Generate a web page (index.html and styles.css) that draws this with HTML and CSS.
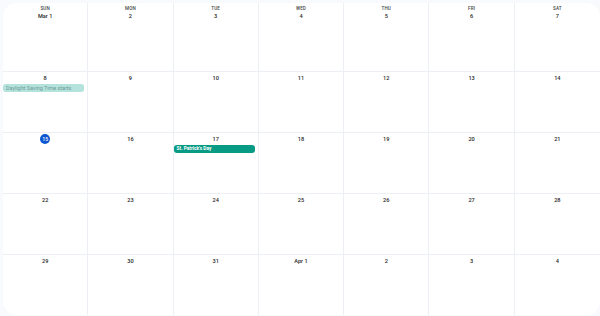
FILE: index.html
```html
<!DOCTYPE html>
<html>
<head>
<meta charset="utf-8">
<link rel="stylesheet" href="styles.css">
</head>
<body>
<div class="panel">
  <div class="grid">
    <div class="cell first"><div class="dow">SUN</div><div class="date">Mar 1</div></div>
    <div class="cell first"><div class="dow">MON</div><div class="date">2</div></div>
    <div class="cell first"><div class="dow">TUE</div><div class="date">3</div></div>
    <div class="cell first"><div class="dow">WED</div><div class="date">4</div></div>
    <div class="cell first"><div class="dow">THU</div><div class="date">5</div></div>
    <div class="cell first"><div class="dow">FRI</div><div class="date">6</div></div>
    <div class="cell first last-col"><div class="dow">SAT</div><div class="date">7</div></div>

    <div class="cell"><div class="date">8</div><div class="event faded">Daylight Saving Time starts</div></div>
    <div class="cell"><div class="date">9</div></div>
    <div class="cell"><div class="date">10</div></div>
    <div class="cell"><div class="date">11</div></div>
    <div class="cell"><div class="date">12</div></div>
    <div class="cell"><div class="date">13</div></div>
    <div class="cell last-col"><div class="date">14</div></div>

    <div class="cell"><div class="date"><span class="today">15</span></div></div>
    <div class="cell"><div class="date">16</div></div>
    <div class="cell"><div class="date">17</div><div class="event solid">St. Patrick's Day</div></div>
    <div class="cell"><div class="date">18</div></div>
    <div class="cell"><div class="date">19</div></div>
    <div class="cell"><div class="date">20</div></div>
    <div class="cell last-col"><div class="date">21</div></div>

    <div class="cell"><div class="date">22</div></div>
    <div class="cell"><div class="date">23</div></div>
    <div class="cell"><div class="date">24</div></div>
    <div class="cell"><div class="date">25</div></div>
    <div class="cell"><div class="date">26</div></div>
    <div class="cell"><div class="date">27</div></div>
    <div class="cell last-col"><div class="date">28</div></div>

    <div class="cell last-row"><div class="date">29</div></div>
    <div class="cell last-row"><div class="date">30</div></div>
    <div class="cell last-row"><div class="date">31</div></div>
    <div class="cell last-row"><div class="date">Apr 1</div></div>
    <div class="cell last-row"><div class="date">2</div></div>
    <div class="cell last-row"><div class="date">3</div></div>
    <div class="cell last-row last-col"><div class="date">4</div></div>
  </div>
</div>
</body>
</html>
```

FILE: styles.css
```css
* { box-sizing: border-box; }
html, body {
  margin: 0;
  padding: 0;
  width: 600px;
  height: 316px;
  overflow: hidden;
  background: #f8fafd;
  font-family: Roboto, "Liberation Sans", sans-serif;
}
body {
  padding: 3px 0 1px 3px;
}
.panel {
  background: #ffffff;
  border-radius: 14px;
  width: 597px;
  height: 312px;
  overflow: hidden;
}
.grid {
  display: grid;
  grid-template-columns: repeat(7, 1fr);
  grid-template-rows: 69px repeat(4, 61px);
  height: 100%;
}
.cell {
  border-right: 1px solid #eceff3;
  border-bottom: 1px solid #eceff3;
  display: flex;
  flex-direction: column;
  align-items: center;
  padding-top: 3px;
  min-width: 0;
}
.cell.last-col { border-right: none; }
.cell.last-row { border-bottom: none; }
.dow {
  font-size: 4.6px;
  line-height: 5px;
  font-weight: 500;
  color: #444746;
  letter-spacing: 0.1px;
  margin-bottom: 2px;
}
.date {
  font-size: 5.6px;
  line-height: 6px;
  font-weight: 500;
  color: #1f1f1f;
  height: 6px;
  display: flex;
  align-items: center;
  justify-content: center;
}
.today {
  width: 10px;
  height: 10px;
  border-radius: 50%;
  background: #0b57d0;
  color: #ffffff;
  display: inline-flex;
  align-items: center;
  justify-content: center;
  font-size: 5.2px;
}
.event {
  align-self: stretch;
  margin: 3px 3px 0 0;
  height: 8px;
  border-radius: 3px;
  font-size: 4.8px;
  line-height: 8px;
  padding-left: 3px;
  white-space: nowrap;
  overflow: hidden;
}
.event.faded {
  background: #b4e2dc;
  color: #6e9c96;
  font-size: 5.4px;
}
.event.solid {
  background: #079a84;
  color: #ffffff;
  font-weight: 700;
}
```
